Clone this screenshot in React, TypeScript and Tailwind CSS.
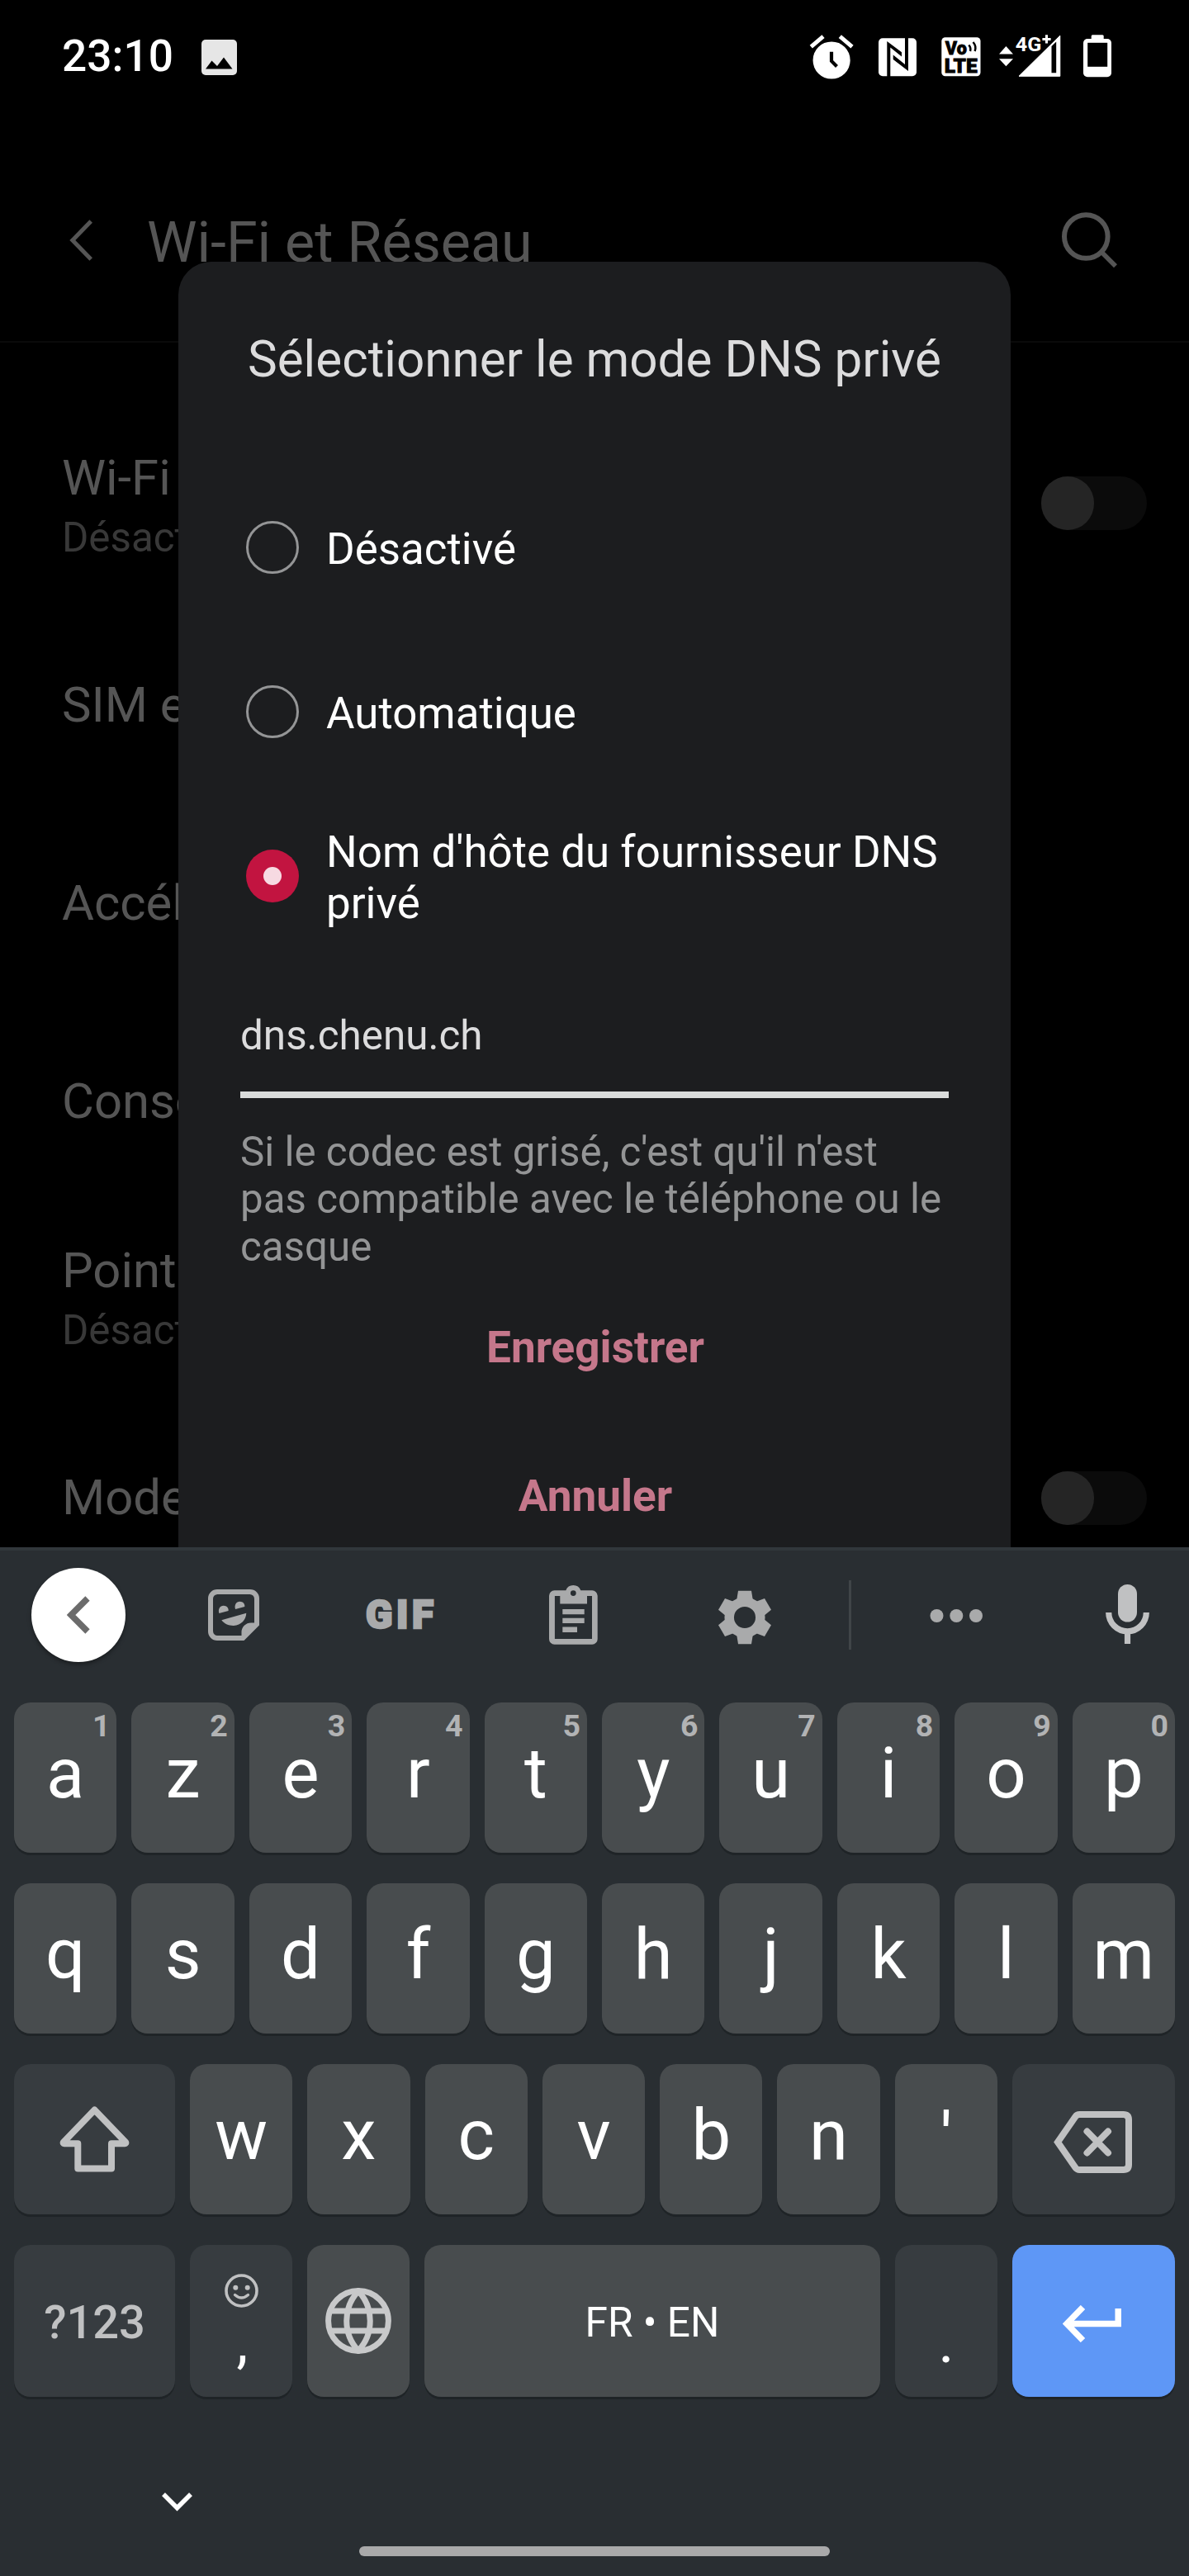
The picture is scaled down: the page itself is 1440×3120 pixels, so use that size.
import type { ReactNode } from "react";

function PictureIcon() {
  return (
    <svg className="h-[43px] w-[43px]" viewBox="0 0 43 43">
      <rect width="43" height="43" rx="5" fill="#e6e6e6" />
      <path d="M5 35.5 12.5 25.5 19 32 27 21.5 37.5 35.5Z" fill="#000" />
    </svg>
  );
}

function AlarmIcon() {
  return (
    <svg className="h-[56px] w-[54px]" viewBox="0 0 54 56">
      <circle cx="27.1" cy="32" r="22.6" fill="#fff" />
      <path d="M2.3 15.6 17 3.2M52 15.6 37.3 3.2" stroke="#fff" strokeWidth="5" />
      <path d="M27 21.7V33l6.5 6.5" stroke="#000" strokeWidth="4.2" fill="none" />
    </svg>
  );
}

function NfcIcon() {
  return (
    <svg className="ml-[30px] h-[56px] w-[46px]" viewBox="0 0 46 56">
      <rect y="5.3" width="46" height="46" rx="5" fill="#fff" />
      <path d="M10.3 9 28 22.3V27.5L14.3 16.5V52H10.3Z" fill="#000" />
      <path d="M17.7 25.5 32 37V4H36V45L17.7 31Z" fill="#000" />
    </svg>
  );
}

function VolteIcon() {
  return (
    <svg className="ml-[30px] h-[56px] w-[48px]" viewBox="0 0 48 56">
      <rect x=".3" y="4.3" width="47.2" height="47" rx="4.5" fill="#fff" />
      <text x="4.8" y="25.4" stroke="#000" strokeWidth=".8" fontFamily="Roboto" fontWeight="900" fontSize="22.5" textLength="26" lengthAdjust="spacingAndGlyphs">Vo</text>
      <text x="3.8" y="46.8" stroke="#000" strokeWidth=".8" fontFamily="Roboto" fontWeight="900" fontSize="23" textLength="40" lengthAdjust="spacingAndGlyphs">LTE</text>
      <path d="M33.3 13.5Q36.3 17 35 21M38.5 10Q43 15 40.6 21" stroke="#000" strokeWidth="2.5" fill="none" />
    </svg>
  );
}

function SignalIcon() {
  return (
    <svg className="ml-[22px] h-[56px] w-[75px]" viewBox="0 0 75 56">
      <path d="M8.4 15 17 24.4H0ZM0 30.3H17L8.4 39.3Z" fill="#fff" />
      <path d="M73.8 2.2V51.3H24Z" fill="#fff" stroke="#fff" strokeLinejoin="round" />
      <path d="M63.5 15 69.2 9.5V47.2H63.5Z" fill="#000" />
      <path d="M52.2 6.4H62.8M57.5 1.3V11.6" stroke="#000" strokeWidth="6.5" />
      <path d="M52.4 6.4H62.6M57.5 1.3V11.5" stroke="#fff" strokeWidth="3" />
      <text x="19.8" y="20.8" fill="#fff" fontFamily="Roboto" fontWeight="700" fontSize="24" textLength="31.5" lengthAdjust="spacingAndGlyphs">4G</text>
    </svg>
  );
}

function BatteryIcon() {
  return (
    <svg className="ml-[27px] h-[56px] w-[34px]" viewBox="0 0 34 56">
      <rect x="9.7" y="1.3" width="15" height="8" rx="1.5" fill="#fff" />
      <rect y="6" width="34" height="46.2" rx="5" fill="#fff" />
      <rect x="5.2" y="10.8" width="24" height="29" fill="#000" />
    </svg>
  );
}

function StatusBar() {
  return (
    <div className="flex h-[138px] shrink-0 items-center pl-[75px] pr-[94px]">
      <span className="pb-[2px] text-[53.2px] leading-[62px] font-medium text-white">23:10</span>
      <div className="ml-[34px] flex-1">
        <PictureIcon />
      </div>
      <AlarmIcon />
      <NfcIcon />
      <VolteIcon />
      <SignalIcon />
      <BatteryIcon />
    </div>
  );
}

function AppBar() {
  return (
    <div className="flex h-[277px] shrink-0 items-center border-b-2 border-[#0a0a0a] pt-[30px] pl-[84px] pr-[86px] text-[#555555]">
      <svg className="h-[50px] w-[28px]" viewBox="0 0 28 50" fill="none" stroke="currentColor" strokeWidth="5">
        <path d="M26.2 2 3.8 25 26.2 48" />
      </svg>
      <h1 className="ml-[66px] flex-1 pt-[7px] text-[68.2px] leading-[80px] font-normal">Wi-Fi et Réseau</h1>
      <svg className="h-[68px] w-[68px]" viewBox="0 0 68 68" fill="none" stroke="currentColor" strokeWidth="6">
        <circle cx="29.3" cy="29.5" r="26.3" />
        <path d="M47.8 48 65 65.3" strokeWidth="5.6" />
      </svg>
    </div>
  );
}

function Toggle({ raised = false }: { raised?: boolean }) {
  return (
    <div className={`h-[65px] w-[128px] rounded-full bg-[#0b0b0b] ${raised ? "mb-[10px]" : ""}`}>
      <div className="h-[65px] w-[64px] rounded-full bg-[#252525]" />
    </div>
  );
}

function SettingRow({ title, detail, children }: { title: string; detail?: string; children?: ReactNode }) {
  return (
    <div className="flex h-[240px] shrink-0 items-center pr-[51px] pl-[75px]">
      <div className={`flex-1 ${detail ? "pb-[4px]" : ""}`}>
        <div className="text-[59.8px] leading-[70px] text-[#555555]">{title}</div>
        {detail && <div className="pt-[8px] text-[49.3px] leading-[58px] text-[#383838]">{detail}</div>}
      </div>
      {children}
    </div>
  );
}

function Radio({ label, checked = false }: { label: string; checked?: boolean }) {
  return (
    <div className="flex h-[199px] items-center gap-[33px] pr-[75px] pl-[82px]">
      {checked ? (
        <div className="flex size-[64px] shrink-0 items-center justify-center rounded-full bg-[#c21440]">
          <div className="size-[22px] rounded-full bg-[#f7dae2]" />
        </div>
      ) : (
        <div className="size-[64px] shrink-0 rounded-full border-[3.5px] border-[#949596]" />
      )}
      <div className="pt-[6px] text-[52.9px] leading-[61.6px] text-white">{label}</div>
    </div>
  );
}

function DnsDialog() {
  return (
    <div className="absolute top-[317px] left-[216px] h-[1600px] w-[1008px] rounded-t-[40px] bg-[#1c1d1f] pt-[84px]">
      <h2 className="text-center text-[60.2px] leading-[70px] font-normal text-[#dcdcdd]">Sélectionner le mode DNS privé</h2>
      <div className="mt-[92px]">
        <Radio label="Désactivé" />
        <Radio label="Automatique" />
        <Radio label="Nom d'hôte du fournisseur DNS privé" checked />
      </div>
      <div className="mx-[75px] mt-[65px] border-b-8 border-[#dadcdb] pb-[39px] text-[49.4px] leading-[58px] text-[#dcdcdd]">dns.chenu.ch</div>
      <p className="mx-[75px] mt-[37px] text-[49.3px] leading-[57.4px] text-[#949596]">
        Si le codec est grisé, c'est qu'il n'est pas compatible avec le téléphone ou le casque
      </p>
      <div className="mt-[62px] flex flex-col items-center gap-[118px] pl-[2px] text-[53.1px] leading-[62px] text-[#c5778b]">
        <button className="font-bold">Enregistrer</button>
        <button className="font-bold">Annuler</button>
      </div>
    </div>
  );
}

function StickerIcon() {
  return (
    <svg className="ml-[100px] h-[62px] w-[62px]" viewBox="0 0 62 62" fill="#a9aaab">
      <path
        fillRule="evenodd"
        d="M11 0H51A11 11 0 0 1 62 11V43.5L43.5 62H11A11 11 0 0 1 0 51V11A11 11 0 0 1 11 0ZM11.5 6A5.5 5.5 0 0 0 6 11.5V50.5A5.5 5.5 0 0 0 11.5 56H40.5V52A11.5 11.5 0 0 1 52 40.5H56V11.5A5.5 5.5 0 0 0 50.5 6Z"
      />
      <path d="M13.4 29C11.6 24 14.5 19.7 18.8 19.7 22.5 19.7 25 22.5 24.6 25.9Z" />
      <path d="M33.1 24C31.3 19 34.2 14.7 38.5 14.7 42.2 14.7 44.7 17.5 44.3 20.9Z" />
      <path d="M16.3 37.3 46.3 28.7C46 36.5 40 43.6 31 44 25 44.2 19.5 41.5 16.3 37.3Z" />
    </svg>
  );
}

function ClipboardIcon() {
  return (
    <svg className="ml-[130px] h-[72px] w-[59px]" viewBox="0 0 59 72" fill="#a9aaab">
      <path
        fillRule="evenodd"
        d="M6.5 6.3H20.3A9.6 9.6 0 0 1 38.3 6.3H52A6.5 6.5 0 0 1 58.7 12.8V65.2A6.5 6.5 0 0 1 52 71.7H6.5A6.5 6.5 0 0 1 0 65.2V12.8A6.5 6.5 0 0 1 6.5 6.3ZM6.9 13V65H52V13H46V22.5H13.3V13ZM29.3 6.2A3.4 3.4 0 1 0 29.3 13 3.4 3.4 0 1 0 29.3 6.2Z"
      />
      <path d="M16.3 29H42.7V35.3H16.3ZM16.3 39.8H42.7V46.1H16.3ZM16.3 50.5H34V57.1H16.3Z" />
    </svg>
  );
}

function GearIcon() {
  return (
    <svg className="mt-[5px] ml-[145px] h-[66px] w-[66px]" viewBox="-33 -33 66 66" fill="#a9aaab">
      <circle r="18.8" fill="none" stroke="#a9aaab" strokeWidth="11.5" />
      {[0, 60, 120, 180, 240, 300].map((angle) => (
        <path key={angle} d="M-8 -32.3H8L10.3 -18H-10.3Z" transform={`rotate(${angle})`} />
      ))}
    </svg>
  );
}

function Toolbar() {
  return (
    <div className="flex h-[156px] items-center pl-[38px]">
      <div className="flex size-[114px] items-center justify-center rounded-full bg-white shadow-[0_3px_5px_rgba(0,0,0,0.35)]">
        <svg className="h-[46px] w-[28px]" viewBox="0 0 28 46" fill="none" stroke="#6b6b6b" strokeWidth="7.5">
          <path d="M25 3 5 23 25 43" />
        </svg>
      </div>
      <StickerIcon />
      <svg className="mb-[2px] ml-[124px] h-[60px] w-[97px]" viewBox="0 0 97 60">
        <text x="5" y="47" fill="#a9aaab" stroke="#a9aaab" strokeWidth="2.5" fontFamily="Roboto" fontWeight="900" fontSize="47.5" letterSpacing="4.6">GIF</text>
      </svg>
      <ClipboardIcon />
      <GearIcon />
      <div className="ml-[93px] h-[84px] w-[3px] bg-[#404548]" />
      <svg className="mt-[2px] ml-[95px] h-[16px] w-[65px]" viewBox="0 0 65 16" fill="#a9aaab">
        <circle cx="8.5" cy="8" r="8" />
        <circle cx="32.3" cy="8" r="8" />
        <circle cx="56" cy="8" r="8" />
      </svg>
      <svg className="mb-[2px] ml-[148px] h-[72px] w-[53px]" viewBox="0 0 53 72">
        <rect x="15" width="23" height="45.5" rx="11.5" fill="#c0c1c2" />
        <path d="M3.7 34A22.8 22.8 0 0 0 49.3 34M26.5 56V72" fill="none" stroke="#c0c1c2" strokeWidth="7.2" />
      </svg>
    </div>
  );
}

const keyBase = "flex h-full rounded-[20px] shadow-[0_3px_0_#1f2427]";

function LetterKey({ letter, digit }: { letter: string; digit?: string }) {
  return (
    <div className={`${keyBase} relative flex-1 items-center justify-center bg-[#484c4e] text-[85px] leading-[90px] text-white ${letter === "'" ? "pb-[3px]" : "pb-[11px]"}`}>
      {letter}
      {digit && <span className="absolute top-[9px] right-[8px] text-[37.5px] leading-[38px] font-bold text-[#b2b3b4]">{digit}</span>}
    </div>
  );
}

function KeyRow({ children }: { children: ReactNode }) {
  return <div className="flex h-[182px] gap-[18px]">{children}</div>;
}

function Keyboard() {
  return (
    <div className="flex h-[1246px] shrink-0 flex-col border-t-4 border-[#31373b] bg-[#292e32]">
      <Toolbar />
      <div className="mt-[28px] flex flex-col gap-[37px] px-[17px]">
        <KeyRow>
          {[..."azertyuiop"].map((c, i) => (
            <LetterKey key={c} letter={c} digit={String((i + 1) % 10)} />
          ))}
        </KeyRow>
        <KeyRow>
          {[..."qsdfghjklm"].map((c) => (
            <LetterKey key={c} letter={c} />
          ))}
        </KeyRow>
        <KeyRow>
          <div className={`${keyBase} w-[195px] items-center justify-center bg-[#373c40]`}>
            <svg className="h-[82px] w-[85px]" viewBox="0 0 85 82" fill="none" stroke="#c0c1c2" strokeWidth="8" strokeLinejoin="round">
              <path d="M42.5 5.5 80 44.5Q81 46 79 46.2H63V76.5H22.3V46.2H6Q4 46 5 44.5Z" />
            </svg>
          </div>
          {[..."wxcvbn'"].map((c) => (
            <LetterKey key={c} letter={c} />
          ))}
          <div className={`${keyBase} w-[197px] items-center justify-center bg-[#373c40] pt-[7px]`}>
            <svg className="h-[75px] w-[96px]" viewBox="0 0 96 75" fill="none" stroke="#c0c1c2" strokeWidth="8">
              <path d="M5 37.5 26.5 6.5Q28.3 4 31.5 4H84.5Q91 4 91 10.5V64.5Q91 71 84.5 71H31.5Q28.3 71 26.5 68.5Z" />
              <path d="M40.5 24.5 66 50.5M66 24.5 40.5 50.5" strokeLinecap="round" />
            </svg>
          </div>
        </KeyRow>
        <div className="flex h-[184px] gap-[18px]">
          <div className={`${keyBase} w-[195px] items-center justify-center bg-[#373c40] pt-[3px] text-[56px] leading-[64px] font-medium text-[#c0c1c2]`}>?123</div>
          <div className={`${keyBase} w-[124px] flex-col items-center bg-[#373c40] pt-[35px]`}>
            <svg className="h-[41px] w-[41px]" viewBox="0 0 41 41" fill="none" stroke="#c0c1c2" strokeWidth="3.6">
              <circle cx="20.5" cy="20.5" r="18.5" />
              <circle cx="13.3" cy="16.8" r="3" fill="#c0c1c2" stroke="none" />
              <circle cx="27.7" cy="16.8" r="3" fill="#c0c1c2" stroke="none" />
              <path d="M12.5 25.5Q20.5 32.5 28.5 25.5" strokeLinecap="round" strokeWidth="3.3" />
            </svg>
            <span className="mt-[12px] pl-[3px] text-[70px] leading-[60px] text-white">,</span>
          </div>
          <div className={`${keyBase} w-[124px] items-center justify-center bg-[#484c4e]`}>
            <svg className="h-[80px] w-[80px]" viewBox="0 0 80 80" fill="none" stroke="#c8c9ca" strokeWidth="7">
              <circle cx="40" cy="40" r="36.4" />
              <path d="M40 4C21 24 21 56 40 76 59 56 59 24 40 4ZM7 28H73M7 52H73" />
            </svg>
          </div>
          <div className={`${keyBase} flex-1 items-center justify-center bg-[#484c4e] pt-[4px] text-[49.6px] leading-[58px] text-white`}>FR • EN</div>
          <div className={`${keyBase} w-[124px] justify-center bg-[#373c40] pt-[87px] text-[74px] leading-[60px] text-white`}>.</div>
          <div className={`${keyBase} w-[197px] items-center justify-center bg-[#5e97f6] pt-[7px] pr-[4px]`}>
            <svg className="h-[45px] w-[71px]" viewBox="0 0 71 45" fill="none" stroke="#fff" strokeWidth="7.5">
              <path d="M24.5 2.5 5 22.5 24.5 42.5M6 22.5H67.2V4" />
            </svg>
          </div>
        </div>
      </div>
      <svg className="mt-[116px] ml-[196px] h-[23px] w-[37px]" viewBox="0 0 37 23" fill="none" stroke="#fff" strokeWidth="5.5">
        <path d="M2 2 18.5 18.5 35 2" />
      </svg>
      <div className="mx-auto mt-[42px] h-[12px] w-[570px] rounded-full bg-[#a9a9aa]" />
    </div>
  );
}

export default function App() {
  return (
    <div className="flex h-[3120px] w-[1440px] flex-col overflow-hidden bg-black font-['Roboto',sans-serif]">
      <div className="relative flex h-[1874px] shrink-0 flex-col overflow-hidden">
        <StatusBar />
        <AppBar />
        <div className="flex flex-col pt-[79px]">
          <SettingRow title="Wi-Fi" detail="Désactivé">
            <Toggle raised />
          </SettingRow>
          <SettingRow title="SIM et" />
          <SettingRow title="Accélé" />
          <SettingRow title="Conso" />
          <SettingRow title="Point" detail="Désactivé" />
          <SettingRow title="Mode">
            <Toggle />
          </SettingRow>
        </div>
        <DnsDialog />
      </div>
      <Keyboard />
    </div>
  );
}
